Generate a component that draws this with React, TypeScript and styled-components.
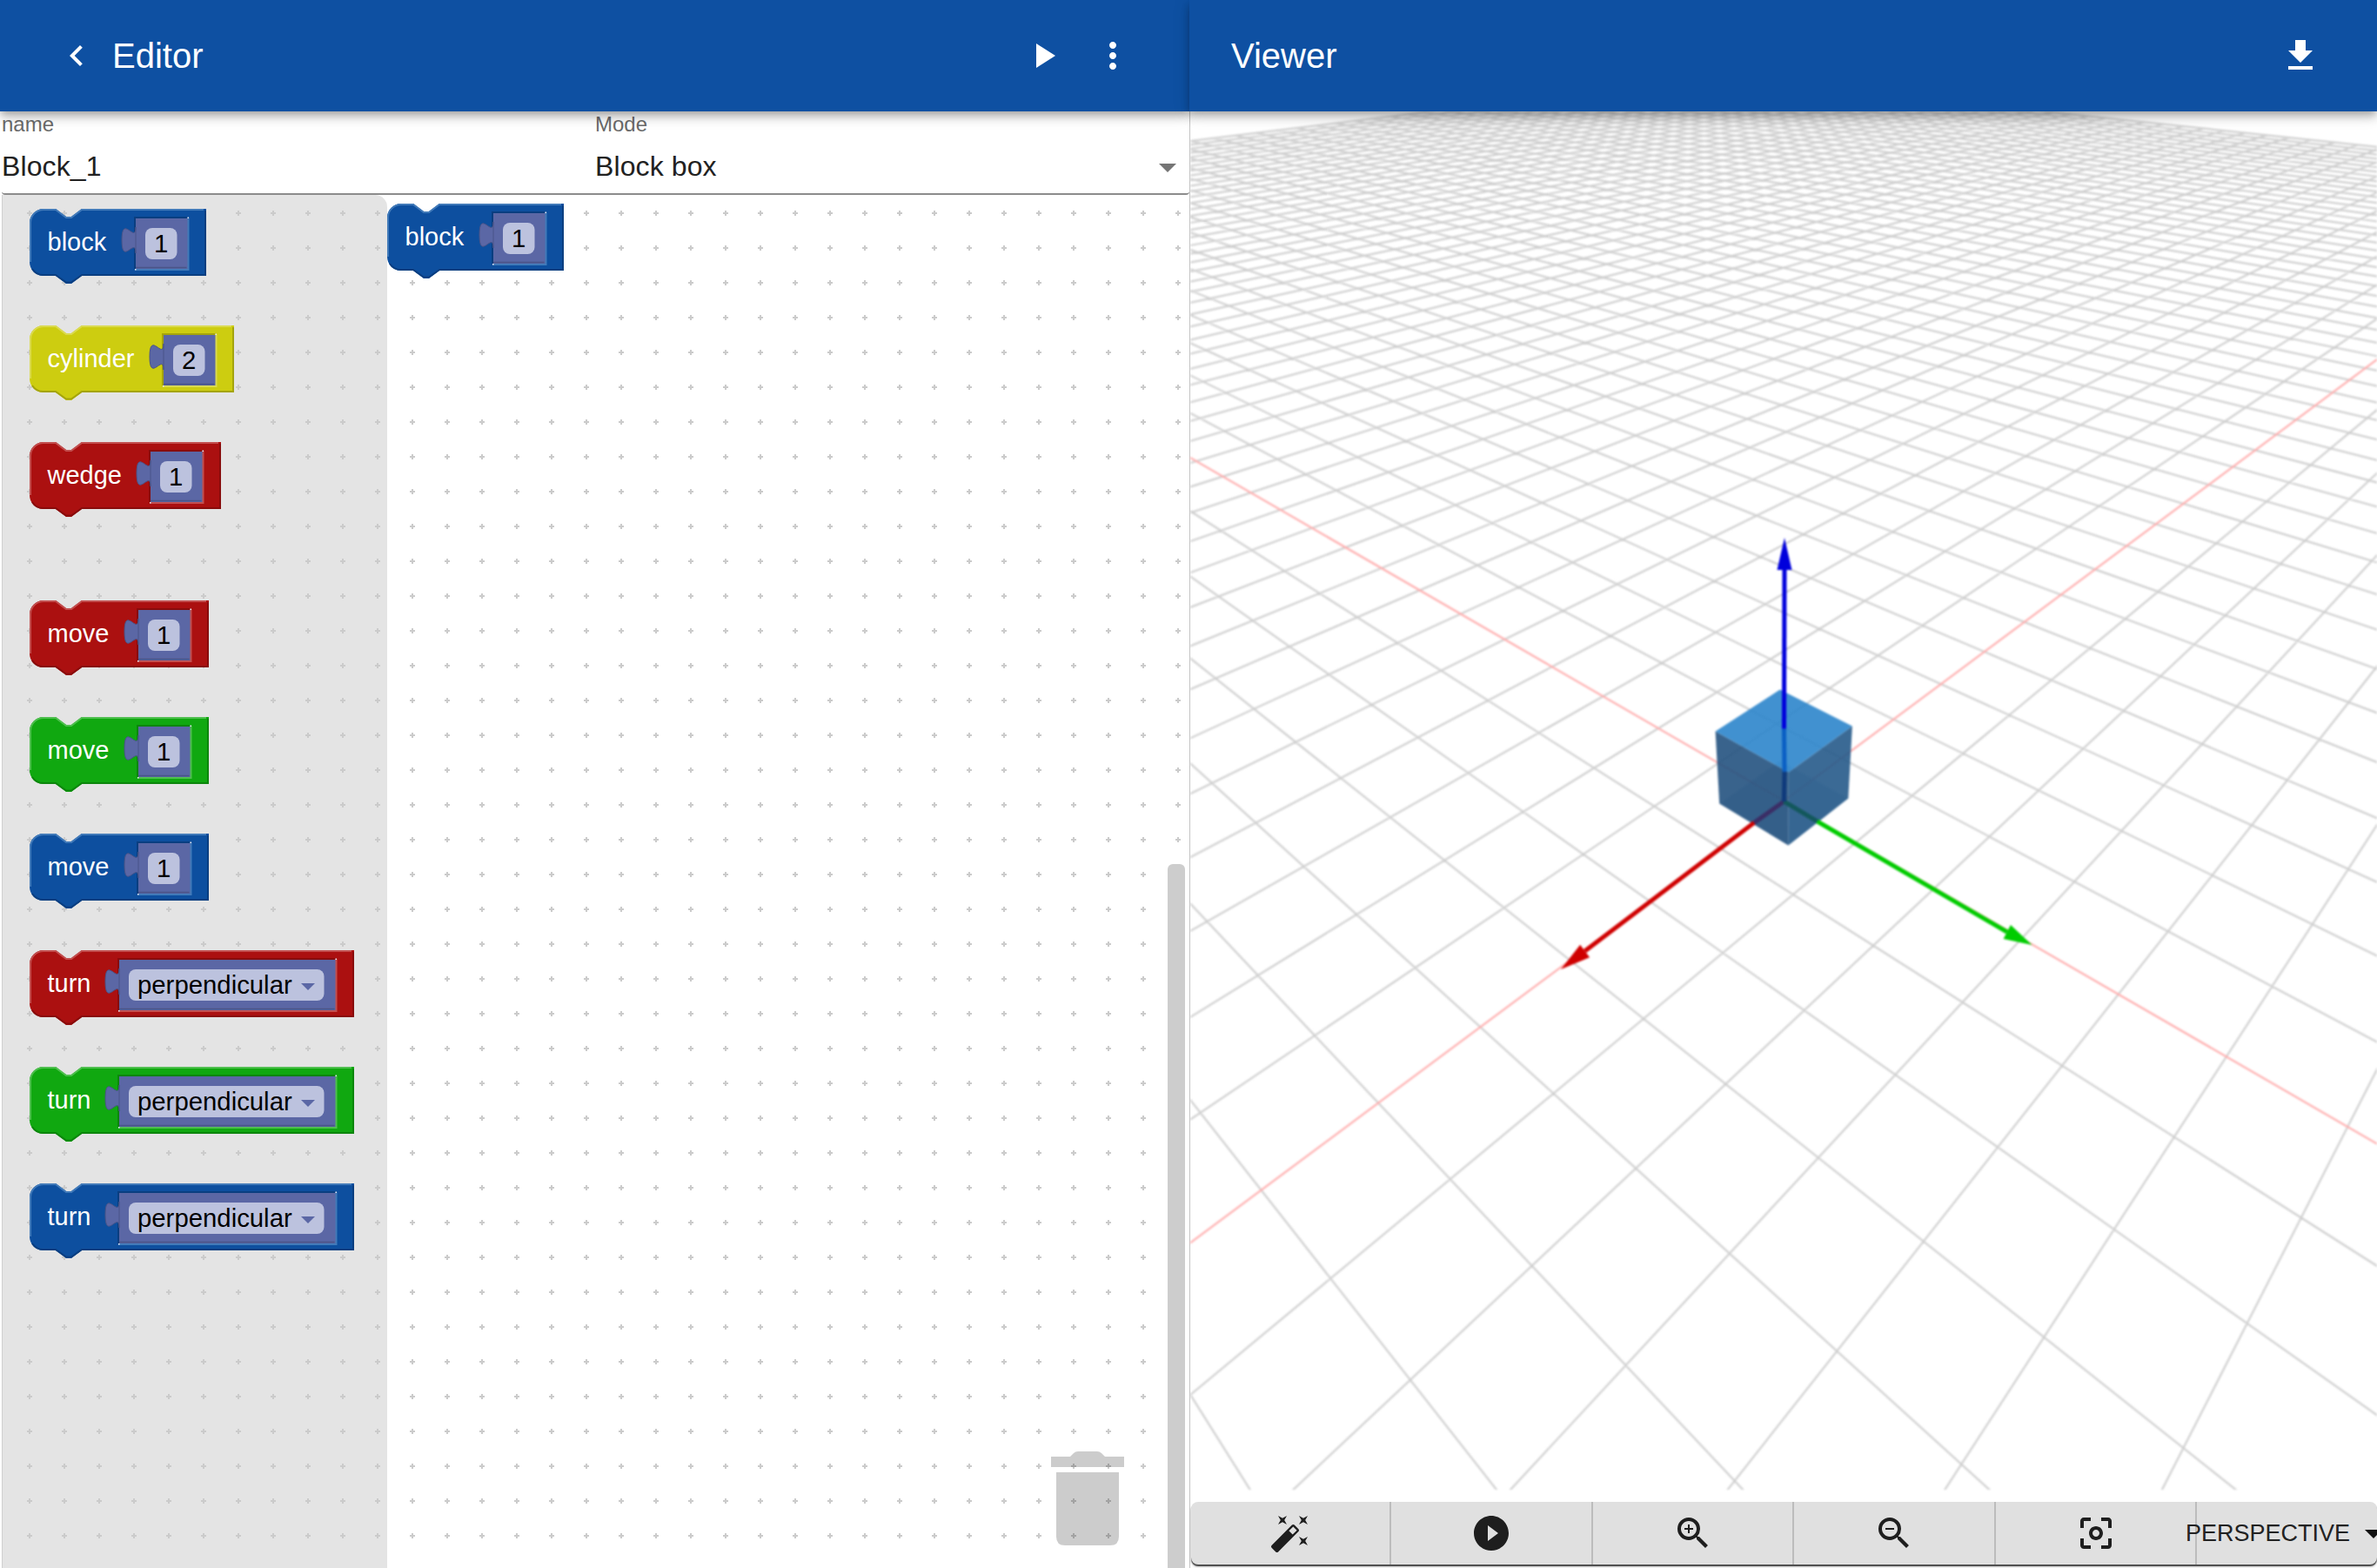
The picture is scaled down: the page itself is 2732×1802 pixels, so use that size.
import React, { useMemo } from "react";
import styled, { createGlobalStyle } from "styled-components";
import {
  MdChevronLeft,
  MdPlayArrow,
  MdMoreVert,
  MdFileDownload,
  MdArrowDropDown,
  MdPlayCircleFilled,
  MdZoomIn,
  MdZoomOut,
  MdCenterFocusWeak,
} from "react-icons/md";

const FONT = `"Liberation Sans", Arial, sans-serif`;
const HEADER_BLUE = "#0e50a2";

const Global = createGlobalStyle`
  html, body { margin: 0; padding: 0; width: 2732px; height: 1802px; overflow: hidden; background: #fff; }
  #root { width: 2732px; height: 1802px; }
`;

const Root = styled.div`
  display: grid;
  grid-template-columns: 1367px 1365px;
  width: 2732px;
  height: 1802px;
  font-family: ${FONT};
  overflow: hidden;
`;

const Panel = styled.section`
  display: flex;
  flex-direction: column;
  height: 1802px;
  min-width: 0;
`;

const AppBar = styled.header<{ $z: number; $pad: number }>`
  position: relative;
  z-index: ${(p) => p.$z};
  flex: none;
  height: 128px;
  display: flex;
  align-items: center;
  box-sizing: border-box;
  padding: 0 48px 0 ${(p) => p.$pad}px;
  background: ${HEADER_BLUE};
  color: #fff;
  box-shadow: 0 4px 8px -2px rgba(0, 0, 0, 0.22), 0 8px 10px 0 rgba(0, 0, 0, 0.14), 0 2px 20px 0 rgba(0, 0, 0, 0.12);
`;

const Title = styled.h1<{ $ml?: number }>`
  margin: 0 auto 0 ${(p) => p.$ml ?? 0}px;
  font-size: 40px;
  line-height: 48px;
  font-weight: 400;
`;

const IconButton = styled.div`
  flex: none;
  width: 80px;
  height: 80px;
  display: flex;
  align-items: center;
  justify-content: center;
  color: #fff;
`;

const Form = styled.div`
  flex: none;
  height: 96px;
  margin-left: 2px;
  box-sizing: border-box;
  display: grid;
  grid-template-columns: 682px 682px;
  padding-top: 1px;
  background: #fff;
  border-bottom: 2px solid #8c8c8c;
  border-radius: 0 0 4px 4px;
`;

const Field = styled.div`
  position: relative;
  display: flex;
  flex-direction: column;
`;

const FieldLabel = styled.label`
  font-size: 24px;
  line-height: 28px;
  color: #6a6a6a;
`;

const FieldValue = styled.div`
  margin-top: 14px;
  font-size: 32px;
  line-height: 40px;
  letter-spacing: 0.1px;
  color: #212121;
`;

const SelectArrow = styled.div`
  position: absolute;
  right: 0;
  top: 39px;
  width: 48px;
  height: 48px;
  color: #757575;
`;

const Area = styled.div`
  flex: 1;
  min-height: 0;
  display: flex;
  margin-left: 2px;
  border-left: 1px solid #cfcfcf;
`;

const Flyout = styled.div`
  position: relative;
  flex: none;
  width: 442px;
  box-sizing: border-box;
  padding: 16px 0 0 31px;
  background: #e4e4e4;
  border-top-right-radius: 14px;
  overflow: hidden;
`;

const Workspace = styled.div`
  position: relative;
  flex: 1;
  padding-top: 10px;
  background: #fff;
  overflow: hidden;
`;

const GridLayer = styled.svg`
  position: absolute;
  inset: 0;
  width: 100%;
  height: 100%;
`;

const BlockSvg = styled.svg<{ $after: number }>`
  position: relative;
  display: block;
  overflow: visible;
  margin-bottom: ${(p) => p.$after}px;
`;

const BlockLabel = styled.text`
  font-family: ${FONT};
  font-size: 29px;
  fill: #fff;
`;

const FieldText = styled.text`
  font-family: ${FONT};
  font-size: 29.33px;
  fill: #000;
`;

const Scrollbar = styled.div`
  position: absolute;
  left: 897px;
  top: 769px;
  bottom: 0;
  width: 20px;
  background: #cdcdcd;
  border-radius: 6px 6px 0 0;
`;

const Trash = styled.svg`
  position: absolute;
  left: 763px;
  top: 1444px;
  width: 84px;
  height: 108px;
`;

const ViewerBody = styled.div`
  flex: 1;
  min-height: 0;
  display: flex;
  flex-direction: column;
  box-sizing: border-box;
  border-left: 1px solid #c4c4c4;
`;

const Canvas = styled.svg`
  flex: none;
  display: block;
  width: 1364px;
  height: 1584px;
  filter: blur(0.8px);
`;

const Toolbar = styled.div`
  flex: none;
  display: flex;
  height: 72px;
  margin: 14px 0 0 1px;
  background: #e0e0e0;
  border-radius: 8px;
  overflow: hidden;
  box-shadow: 0 2px 1px rgba(0, 0, 0, 0.65), 0 3px 3px rgba(0, 0, 0, 0.2);
`;

const ToolButton = styled.div<{ $w: number }>`
  flex: none;
  width: ${(p) => p.$w}px;
  box-sizing: border-box;
  display: flex;
  align-items: center;
  justify-content: center;
  border-right: 2px solid #bcbcbc;
  color: #1e1e1e;
`;

const ModeSelect = styled.div`
  flex: none;
  display: flex;
  align-items: center;
  margin-left: -13px;
  color: #222;
  font-size: 27px;
  white-space: nowrap;
`;

const ModeArrow = styled.div`
  flex: none;
  width: 48px;
  height: 48px;
  margin-left: 3px;
  color: #111;
`;

type Tone = { fill: string; light: string; dark: string };
const BLUE: Tone = { fill: "#0d4f9f", light: "#417ab9", dark: "#0a3e80" };
const YELLOW: Tone = { fill: "#cdcd10", light: "#dada4f", dark: "#a4a40c" };
const RED: Tone = { fill: "#ab1010", light: "#c24f4f", dark: "#880c0c" };
const GREEN: Tone = { fill: "#10a810", light: "#4fbf4f", dark: "#0c860c" };

type BlockProps = {
  tone: Tone;
  label: string;
  slotX: number;
  width: number;
  value?: string;
  dropdown?: boolean;
  after?: number;
};

const SLOT = "#5b67a5";
const FIELD = "#bcc2de";

function Block({ tone, label, slotX, width, value, dropdown, after = 0 }: BlockProps) {
  const slotW = width - 20.5 - slotX;
  const fx = slotX + 11;
  const fw = slotW - (dropdown ? 25 : 24);
  const H = 77;
  return (
    <BlockSvg $after={after} width={width} height={86} viewBox={`0 0 ${width} 86`}>
      <path
        d={`M0,16 A16,16 0 0 1 16,0 H30 l12,9 h6 l12,-9 H${width} V${H} H60 l-12,9 h-6 l-12,-9 H16 A16,16 0 0 1 0,${H - 16} Z`}
        fill={tone.fill}
      />
      <path
        d={`M1,${H - 16} V16 A15,15 0 0 1 16,1 H30 l12,9 h6 l12,-9 H${width - 3}`}
        fill="none"
        stroke={tone.light}
        strokeWidth={2}
      />
      <path
        d={`M${width - 1},2 V${H - 1} H60 l-12,8.5 h-6 l-12,-8.5 H16 A15,15 0 0 1 3,${H - 8}`}
        fill="none"
        stroke={tone.dark}
        strokeWidth={2}
      />
      <path d={`M${slotX - 1},11 H${slotX + slotW} V${69} H${slotX - 1} Z`} fill={SLOT} />
      <path d={`M${slotX - 1},69 V10 H${slotX + slotW - 1}`} fill="none" stroke={tone.dark} strokeWidth={2} />
      <path
        d={`M${slotX - 1},70 H${slotX + slotW} V10`}
        fill="none"
        stroke={tone.light}
        strokeWidth={2}
      />
      <path d={`M${slotX},67.5 H${slotX + slotW - 2}`} stroke="#4a5488" strokeWidth={1.5} />
      <rect x={slotX + slotW - 1} y={9.5} width={1.5} height={1.5} fill="#e6e8f2" />
      <rect x={slotX - 1} y={69} width={1.5} height={1.5} fill="#e6e8f2" />
      <path
        d={`M${slotX},21 c0,20 -16,-16 -16,15 s16,-5 16,15 Z`}
        fill={SLOT}
        stroke={"#4a5488"}
        strokeWidth={1}
      />
      <BlockLabel x={20.5} y={48}>
        {label}
      </BlockLabel>
      <rect x={fx} y={22} width={fw} height={36} rx={8} fill={FIELD} />
      {dropdown ? (
        <>
          <FieldText x={fx + 10} y={50}>
            {value}
          </FieldText>
          <path d={`M${fx + 198},38 h16 l-8,8 Z`} fill={SLOT} />
        </>
      ) : (
        <FieldText x={fx + fw / 2} y={50} textAnchor="middle">
          {value}
        </FieldText>
      )}
    </BlockSvg>
  );
}

function DotGrid({ id, ox }: { id: string; ox: number }) {
  return (
    <GridLayer>
      <defs>
        <pattern id={id} x={ox} y={1} width={40} height={40} patternUnits="userSpaceOnUse">
          <rect x={17} y={19} width={6} height={2} fill="#cbcbcb" />
          <rect x={19} y={17} width={2} height={6} fill="#cbcbcb" />
        </pattern>
      </defs>
      <rect width="100%" height="100%" fill={`url(#${id})`} />
    </GridLayer>
  );
}

/* Ground-plane camera fitted to the reference */
const F = 1161;
const CX = 2050.5;
const CY = 920.5;
const DIST = 11.06;
const CA = 0.75;
const SA = 0.661;
const CP = 0.755;
const SP = 0.656;
const CUBE_H = 0.985;

type V3 = [number, number, number];
function toCam([x, y, z]: V3): V3 {
  const g = -CA * x - SA * y;
  return [-SA * x + CA * y, g * SP + z * CP, DIST + g * CP - z * SP];
}
function toScreen(c: V3): [number, number] {
  return [CX + (F * c[0]) / c[2], CY - (F * c[1]) / c[2]];
}
function project(p: V3): [number, number] {
  return toScreen(toCam(p));
}
function projLine(a: V3, b: V3): string {
  let ca = toCam(a);
  let cb = toCam(b);
  const near = 0.6;
  if (ca[2] < near && cb[2] < near) return "";
  const mix = (u: V3, v: V3): V3 => {
    const t = (near - u[2]) / (v[2] - u[2]);
    return [u[0] + (v[0] - u[0]) * t, u[1] + (v[1] - u[1]) * t, near];
  };
  if (ca[2] < near) ca = mix(ca, cb);
  if (cb[2] < near) cb = mix(cb, ca);
  const s = toScreen(ca);
  const e = toScreen(cb);
  return `M${s[0].toFixed(1)},${s[1].toFixed(1)}L${e[0].toFixed(1)},${e[1].toFixed(1)}`;
}
function poly(points: V3[]): string {
  return points.map((p) => project(p).map((n) => n.toFixed(1)).join(",")).join(" ");
}
function seg(a: [number, number], b: [number, number]) {
  return { x1: a[0], y1: a[1], x2: b[0], y2: b[1] };
}
function head(tip: [number, number], base: [number, number], hw: number): string {
  const dx = tip[0] - base[0];
  const dy = tip[1] - base[1];
  const len = Math.hypot(dx, dy);
  const nx = (-dy / len) * hw;
  const ny = (dx / len) * hw;
  return `${tip[0]},${tip[1]} ${base[0] + nx},${base[1] + ny} ${base[0] - nx},${base[1] - ny}`;
}

function Scene() {
  const N = 49;
  const paths = useMemo(() => {
    let grey = "";
    for (let i = -N; i <= N; i++) {
      if (i === 0) continue;
      grey += projLine([i, -N, 0], [i, N, 0]);
      grey += projLine([-N, i, 0], [N, i, 0]);
    }
    const pink = projLine([0, -N, 0], [0, N, 0]) + projLine([-N, 0, 0], [N, 0, 0]);
    return { grey, pink };
  }, []);
  const O: [number, number] = [2050.4, 921];
  const blueTop = project([0, 0, CUBE_H]);
  const h = CUBE_H;
  return (
    <Canvas viewBox="1368 128 1364 1584">
      <path d={paths.grey} stroke="#d0d0d0" strokeWidth={2.2} fill="none" />
      <path d={paths.pink} stroke="#ffb0b0" strokeWidth={2.2} fill="none" />

      <polygon points={poly([[0.5, 0.5, 0], [0.5, -0.5, 0], [-0.5, -0.5, 0], [-0.5, 0.5, 0]])} fill="#2a5a90" fillOpacity={0.2} />
      <polygon points={poly([[0.5, -0.5, 0], [0.5, 0.5, 0], [0.5, 0.5, h], [0.5, -0.5, h]])} fill="#24527f" fillOpacity={0.9} />
      <polygon points={poly([[-0.5, 0.5, 0], [0.5, 0.5, 0], [0.5, 0.5, h], [-0.5, 0.5, h]])} fill="#265a8a" fillOpacity={0.9} />
      <polygon points={poly([[0.5, 0.5, h], [0.5, -0.5, h], [-0.5, -0.5, h], [-0.5, 0.5, h]])} fill="#2c85cb" fillOpacity={0.9} />

      <line {...seg(O, [2016, 945.6])} stroke="#3b2e66" strokeWidth={5} />
      <line {...seg([2016, 945.6], [1821.6, 1093])} stroke="#cf0000" strokeWidth={5} />
      <polygon points={head([1794, 1114], [1821.6, 1093], 9)} fill="#cf0000" />

      <line {...seg(O, [2088.7, 944])} stroke="#13585c" strokeWidth={5} />
      <line {...seg([2088.7, 944], [2306.8, 1071])} stroke="#00cc00" strokeWidth={5} />
      <polygon points={head([2335.5, 1086], [2306.8, 1071], 9)} fill="#00cc00" />

      <line {...seg(O, [2051, 887])} stroke="#0f3a7c" strokeWidth={5} />
      <line {...seg([2051, 887], blueTop)} stroke="#0a5fc4" strokeWidth={5} />
      <line {...seg(blueTop, [2051, 655])} stroke="#0000dc" strokeWidth={5} />
      <polygon points={head([2051, 618], [2051, 655], 8.5)} fill="#0000dc" />
    </Canvas>
  );
}

function WandIcon() {
  return (
    <svg width={48} height={48} viewBox="0 0 24 24" fill="currentColor">
      <path d="M7.5,5.6L5,7L6.4,4.5L5,2L7.5,3.4L10,2L8.6,4.5L10,7L7.5,5.6M19.5,15.4L22,14L20.6,16.5L22,19L19.5,17.6L17,19L18.4,16.5L17,14L19.5,15.4M22,2L20.6,4.5L22,7L19.5,5.6L17,7L18.4,4.5L17,2L19.5,3.4L22,2M13.34,12.78L15.78,10.34L13.66,8.22L11.22,10.66L13.34,12.78M14.37,7.29L16.71,9.63C17.1,10 17.1,10.65 16.71,11.04L5.04,22.71C4.65,23.1 4,23.1 3.63,22.71L1.29,20.37C0.9,20 0.9,19.35 1.29,18.96L12.96,7.29C13.35,6.9 14,6.9 14.37,7.29Z" />
    </svg>
  );
}

export default function App() {
  return (
    <>
      <Global />
      <Root>
        <Panel>
          <AppBar $z={3} $pad={48}>
            <IconButton>
              <MdChevronLeft size={48} />
            </IconButton>
            <Title $ml={1}>Editor</Title>
            <IconButton>
              <MdPlayArrow size={48} />
            </IconButton>
            <IconButton>
              <MdMoreVert size={48} />
            </IconButton>
          </AppBar>
          <Form>
            <Field>
              <FieldLabel>name</FieldLabel>
              <FieldValue>Block_1</FieldValue>
            </Field>
            <Field>
              <FieldLabel>Mode</FieldLabel>
              <FieldValue>Block box</FieldValue>
              <SelectArrow>
                <MdArrowDropDown size={48} />
              </SelectArrow>
            </Field>
          </Form>
          <Area>
            <Flyout>
              <DotGrid id="flyout-grid" ox={11} />
              <Block tone={BLUE} label="block" slotX={122} width={203} value="1" after={48} />
              <Block tone={YELLOW} label="cylinder" slotX={154} width={235} value="2" after={48} />
              <Block tone={RED} label="wedge" slotX={139} width={220} value="1" after={96} />
              <Block tone={RED} label="move" slotX={125} width={206} value="1" after={48} />
              <Block tone={GREEN} label="move" slotX={125} width={206} value="1" after={48} />
              <Block tone={BLUE} label="move" slotX={125} width={206} value="1" after={48} />
              <Block tone={RED} label="turn" slotX={103} width={373} value="perpendicular" dropdown after={48} />
              <Block tone={GREEN} label="turn" slotX={103} width={373} value="perpendicular" dropdown after={48} />
              <Block tone={BLUE} label="turn" slotX={103} width={373} value="perpendicular" dropdown />
            </Flyout>
            <Workspace>
              <DotGrid id="workspace-grid" ox={9} />
              <Block tone={BLUE} label="block" slotX={122} width={203} value="1" />
              <Trash viewBox="0 0 84 108">
                <path
                  d="M0,6 H22 L26,2 Q28,0 31,0 H53 Q56,0 58,2 L62,6 H84 V18 H0 Z M6,24 H78 V98 Q78,108 68,108 H16 Q6,108 6,98 Z"
                  fill="rgba(0,0,0,0.2)"
                />
              </Trash>
              <Scrollbar />
            </Workspace>
          </Area>
        </Panel>
        <Panel>
          <AppBar $z={4} $pad={48}>
            <Title>Viewer</Title>
            <IconButton>
              <MdFileDownload size={48} />
            </IconButton>
          </AppBar>
          <ViewerBody>
            <Scene />
            <Toolbar>
              <ToolButton $w={230}>
                <WandIcon />
              </ToolButton>
              <ToolButton $w={232}>
                <MdPlayCircleFilled size={48} />
              </ToolButton>
              <ToolButton $w={231}>
                <MdZoomIn size={48} />
              </ToolButton>
              <ToolButton $w={232}>
                <MdZoomOut size={48} />
              </ToolButton>
              <ToolButton $w={231}>
                <MdCenterFocusWeak size={48} />
              </ToolButton>
              <ModeSelect>
                PERSPECTIVE
                <ModeArrow>
                  <MdArrowDropDown size={48} />
                </ModeArrow>
              </ModeSelect>
            </Toolbar>
          </ViewerBody>
        </Panel>
      </Root>
    </>
  );
}
